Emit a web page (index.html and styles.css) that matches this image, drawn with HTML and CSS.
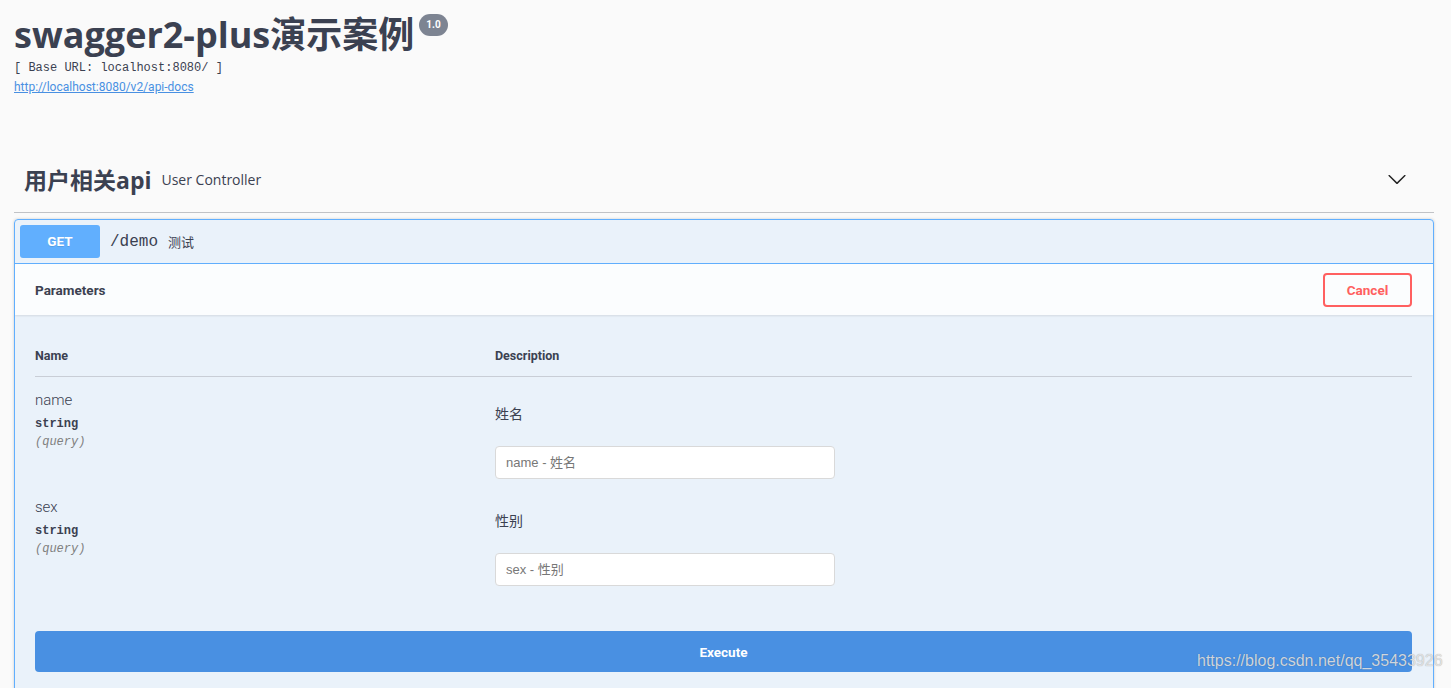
FILE: index.html
```html
<!DOCTYPE html>
<html lang="zh">
<head>
<meta charset="utf-8">
<title>swagger2-plus演示案例</title>
<link rel="stylesheet" href="styles.css">
</head>
<body>
<div class="page">
  <div class="info">
    <div class="title-row">
      <h2 class="title">swagger2-plus演示案例</h2>
      <span class="version">1.0</span>
    </div>
    <div class="base-url">[ Base URL: localhost:8080/ ]</div>
    <a class="doc-link" href="#">http://localhost:8080/v2/api-docs</a>
  </div>

  <div class="tag-section">
    <div class="tag">
      <span class="tag-name">用户相关api</span>
      <span class="tag-desc">User Controller</span>
      <svg class="arrow" width="20" height="20" viewBox="0 0 20 20"><path d="M17.418 6.109c.272-.268.709-.268.979 0s.271.701 0 .969l-7.908 7.830c-.27.268-.707.268-.979 0l-7.908-7.830c-.27-.268-.27-.701 0-.969.271-.268.709-.268.979 0L10 13.25l7.418-7.141z" fill="#222"/></svg>
    </div>

    <div class="opblock">
      <div class="summary">
        <span class="method">GET</span>
        <span class="path">/demo</span>
        <span class="summary-desc">测试</span>
      </div>
      <div class="section-header">
        <span class="section-title">Parameters</span>
        <button class="btn-cancel">Cancel</button>
      </div>
      <div class="table-container">
        <table class="params">
          <thead>
            <tr><th class="col-name">Name</th><th class="col-desc">Description</th></tr>
          </thead>
          <tbody>
            <tr>
              <td class="col-name">
                <div class="param-name">name</div>
                <div class="param-type">string</div>
                <div class="param-in">(query)</div>
              </td>
              <td class="col-desc">
                <p class="param-text">姓名</p>
                <div><input class="param-input" type="text" placeholder="name - 姓名"></div>
              </td>
            </tr>
            <tr>
              <td class="col-name">
                <div class="param-name">sex</div>
                <div class="param-type">string</div>
                <div class="param-in">(query)</div>
              </td>
              <td class="col-desc">
                <p class="param-text">性别</p>
                <div><input class="param-input" type="text" placeholder="sex - 性别"></div>
              </td>
            </tr>
          </tbody>
        </table>
      </div>
      <div class="execute-wrapper">
        <button class="btn-execute">Execute</button>
      </div>
    </div>
  </div>
</div>
<div class="watermark">https://blog.csdn.net/qq_35433926</div>
</body>
</html>
```

FILE: styles.css
```css
* { box-sizing: border-box; }
html, body { margin: 0; padding: 0; }
body {
  background: #fafafa;
  color: #3b4151;
  font-family: "Open Sans", "Noto Sans CJK SC", sans-serif;
  overflow: hidden;
}
.page { padding: 0 17px 0 14px; }

.info { padding-top: 13px; }
.title-row { display: flex; align-items: flex-start; }
.title {
  margin: 0;
  font-size: 36px;
  line-height: 44px;
  font-weight: 700;
  color: #3b4151;
}
.version {
  margin: 1px 0 0 5px;
  background: #7d8492;
  color: #fff;
  font-family: "Roboto", sans-serif;
  font-weight: 700;
  font-size: 10px;
  line-height: 22px;
  height: 22px;
  padding: 0 7px;
  border-radius: 11px;
}
.base-url {
  margin-top: 3px;
  font-family: "Liberation Mono", monospace;
  font-size: 12px;
  line-height: 16px;
  color: #3b4151;
  font-weight: 300;
}
.doc-link {
  display: block;
  width: max-content;
  margin-top: 3px;
  font-family: "Roboto", sans-serif;
  font-size: 12px;
  line-height: 16px;
  color: #4990e2;
  text-decoration: underline;
}

.tag-section { margin-top: 55px; }
.tag {
  display: flex;
  align-items: center;
  height: 63px;
  padding: 0 27px 4px 10px;
  border-bottom: 1px solid rgba(59, 65, 81, 0.3);
}
.tag-name {
  font-size: 23px;
  font-weight: 700;
  font-family: "Open Sans", "Noto Sans CJK SC", sans-serif;
}
.tag-desc {
  margin-left: 10px;
  font-size: 14px;
  margin-top: 1px;
}
.arrow { margin-left: auto; margin-top: 0; }

.opblock {
  margin-top: 6px;
  border: 1px solid #61affe;
  border-radius: 4px;
  background: rgba(97, 175, 254, 0.1);
  box-shadow: 0 0 3px rgba(0, 0, 0, 0.19);
  overflow: hidden;
}
.summary {
  display: flex;
  align-items: center;
  padding: 5px;
  border-bottom: 1px solid #61affe;
}
.method {
  width: 80px;
  height: 33px;
  line-height: 33px;
  text-align: center;
  background: #61affe;
  color: #fff;
  border-radius: 3px;
  font-family: "Roboto", sans-serif;
  font-weight: 700;
  font-size: 13.5px;
  text-shadow: 0 1px 0 rgba(0, 0, 0, 0.1);
}
.path {
  margin-left: 10px;
  font-family: "Liberation Mono", monospace;
  font-size: 16px;
  color: #3b4151;
}
.summary-desc {
  margin-left: 10px;
  font-size: 13px;
  color: #3b4151;
}

.section-header {
  display: flex;
  align-items: center;
  justify-content: space-between;
  min-height: 51px;
  padding: 0 21px 0 20px;
  background: rgba(255, 255, 255, 0.8);
  box-shadow: 0 1px 2px rgba(0, 0, 0, 0.1);
}
.section-title {
  font-family: "Roboto", sans-serif;
  font-weight: 700;
  font-size: 13.5px;
}
.btn-cancel {
  width: 89px;
  height: 34px;
  border: 2px solid #ff6060;
  border-radius: 4px;
  background: transparent;
  color: #ff6060;
  font-family: "Roboto", sans-serif;
  font-weight: 700;
  font-size: 13.5px;
}

.table-container { padding: 20px 21px 40px 20px; }
.params { width: 100%; border-collapse: collapse; }
.params th {
  text-align: left;
  padding: 12px 0 12px;
  font-family: "Roboto", sans-serif;
  font-weight: 700;
  font-size: 12.5px;
  line-height: 17px;
  border-bottom: 1px solid #c9ced6;
}
.params th.col-name, .params td.col-name { width: 460px; }
.params td { vertical-align: top; padding: 10px 0 0; }
.param-name {
  font-family: "Roboto", sans-serif;
  font-size: 15px;
  line-height: 26px;
  font-weight: 300;
}
.param-type {
  padding: 4px 0 0;
  font-family: "Liberation Mono", "DejaVu Sans Mono", monospace;
  font-weight: 700;
  font-size: 12px;
  line-height: 14px;
}
.param-in {
  padding-top: 4px;
  font-family: "Liberation Mono", "DejaVu Sans Mono", monospace;
  font-style: italic;
  font-size: 12px;
  line-height: 14px;
  color: gray;
}
.param-text {
  margin: 16px 0 22px;
  font-size: 14px;
  line-height: 21px;
}
.param-input {
  display: block;
  margin: 5px 0;
  width: 340px;
  height: 33px;
  padding: 0 10px;
  border: 1px solid #d9d9d9;
  border-radius: 4px;
  background: #fff;
  font-family: "Liberation Sans", "Noto Sans CJK SC", sans-serif;
  font-size: 13px;
}
.param-input::placeholder { color: #777; }

.execute-wrapper { padding: 0 21px 20px 20px; }
.btn-execute {
  display: block;
  width: 100%;
  height: 41px;
  border: 0;
  border-radius: 4px;
  background: #4990e2;
  color: #fff;
  font-family: "Roboto", sans-serif;
  font-weight: 700;
  font-size: 13.5px;
}

.watermark {
  position: absolute;
  left: 1197px;
  top: 651px;
  font-family: "Liberation Sans", sans-serif;
  font-size: 16px;
  line-height: 20px;
  color: rgba(235, 235, 235, 0.85);
  text-shadow: 0 0 1px rgba(0, 0, 0, 0.35);
}
```
